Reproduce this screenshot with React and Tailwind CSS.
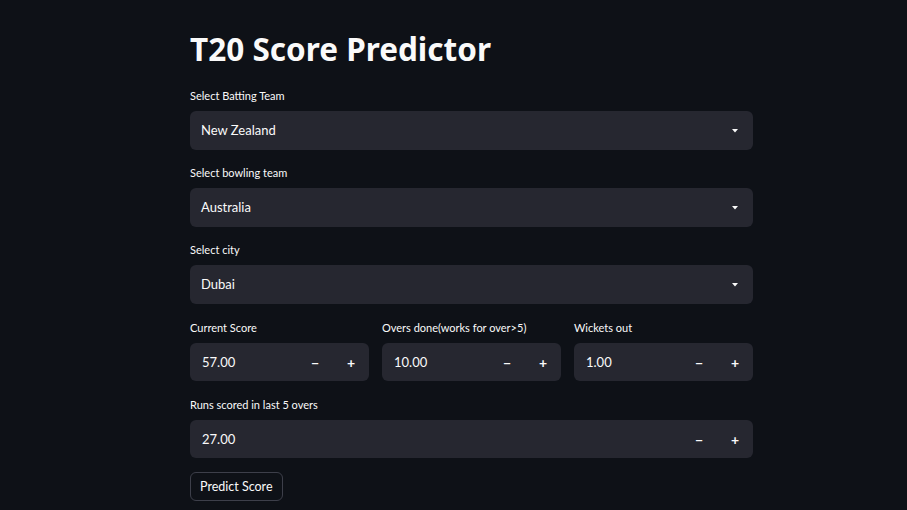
import React from 'react';

const font = { fontFamily: 'Lato, "Noto Sans", sans-serif' };

const Label = ({ children }) => (
  <p className="h-[22px] text-[11px] leading-[14px] text-[#fafafa]">{children}</p>
);

const Select = ({ label, value }) => (
  <div>
    <Label>{label}</Label>
    <div className="flex h-[39px] items-center justify-between rounded-md bg-[#262730] pl-[11px] pr-[15px]">
      <span className="text-[13px] text-[#fafafa]">{value}</span>
      <svg width="6" height="4" viewBox="0 0 6 4" className="mt-[1px]">
        <path d="M0 0h6L3 3.5z" fill="#fafafa" />
      </svg>
    </div>
  </div>
);

const NumberInput = ({ label, value }) => (
  <div className="min-w-0 flex-1">
    <Label>{label}</Label>
    <div className="flex h-[38px] items-center rounded-md bg-[#262730]">
      <span className="flex-1 pl-[12px] pt-[2px] text-[13px] text-[#fafafa]">{value}</span>
      <span className="flex h-full w-[36px] items-center justify-center text-[14px] font-bold text-[#fafafa]">−</span>
      <span className="flex h-full w-[36px] items-center justify-center text-[14px] font-bold text-[#fafafa]">+</span>
    </div>
  </div>
);

export default function App() {
  return (
    <div className="min-h-[510px] w-full bg-[#0e1117]" style={font}>
      <div className="ml-[190px] w-[563px] pt-[29px]">
        <h1 className="mb-[20px] text-[31.5px] font-bold leading-[40px] text-[#fafafa]" style={{ fontFamily: '"Noto Sans", sans-serif' }}>
          T20 Score Predictor
        </h1>
        <div className="flex flex-col gap-[16px]">
          <Select label="Select Batting Team" value="New Zealand" />
          <Select label="Select bowling team" value="Australia" />
          <Select label="Select city" value="Dubai" />
          <div className="mt-[1px] flex gap-[13px]">
            <NumberInput label="Current Score" value="57.00" />
            <NumberInput label="Overs done(works for over>5)" value="10.00" />
            <NumberInput label="Wickets out" value="1.00" />
          </div>
          <div className="mt-[1px]">
            <NumberInput label="Runs scored in last 5 overs" value="27.00" />
          </div>
        </div>
        <button className="mt-[14px] h-[29px] rounded-md border border-[#3d3f4a] px-[9px] pt-[2px] text-[12.5px] text-[#fafafa]">
          Predict Score
        </button>
      </div>
    </div>
  );
}
